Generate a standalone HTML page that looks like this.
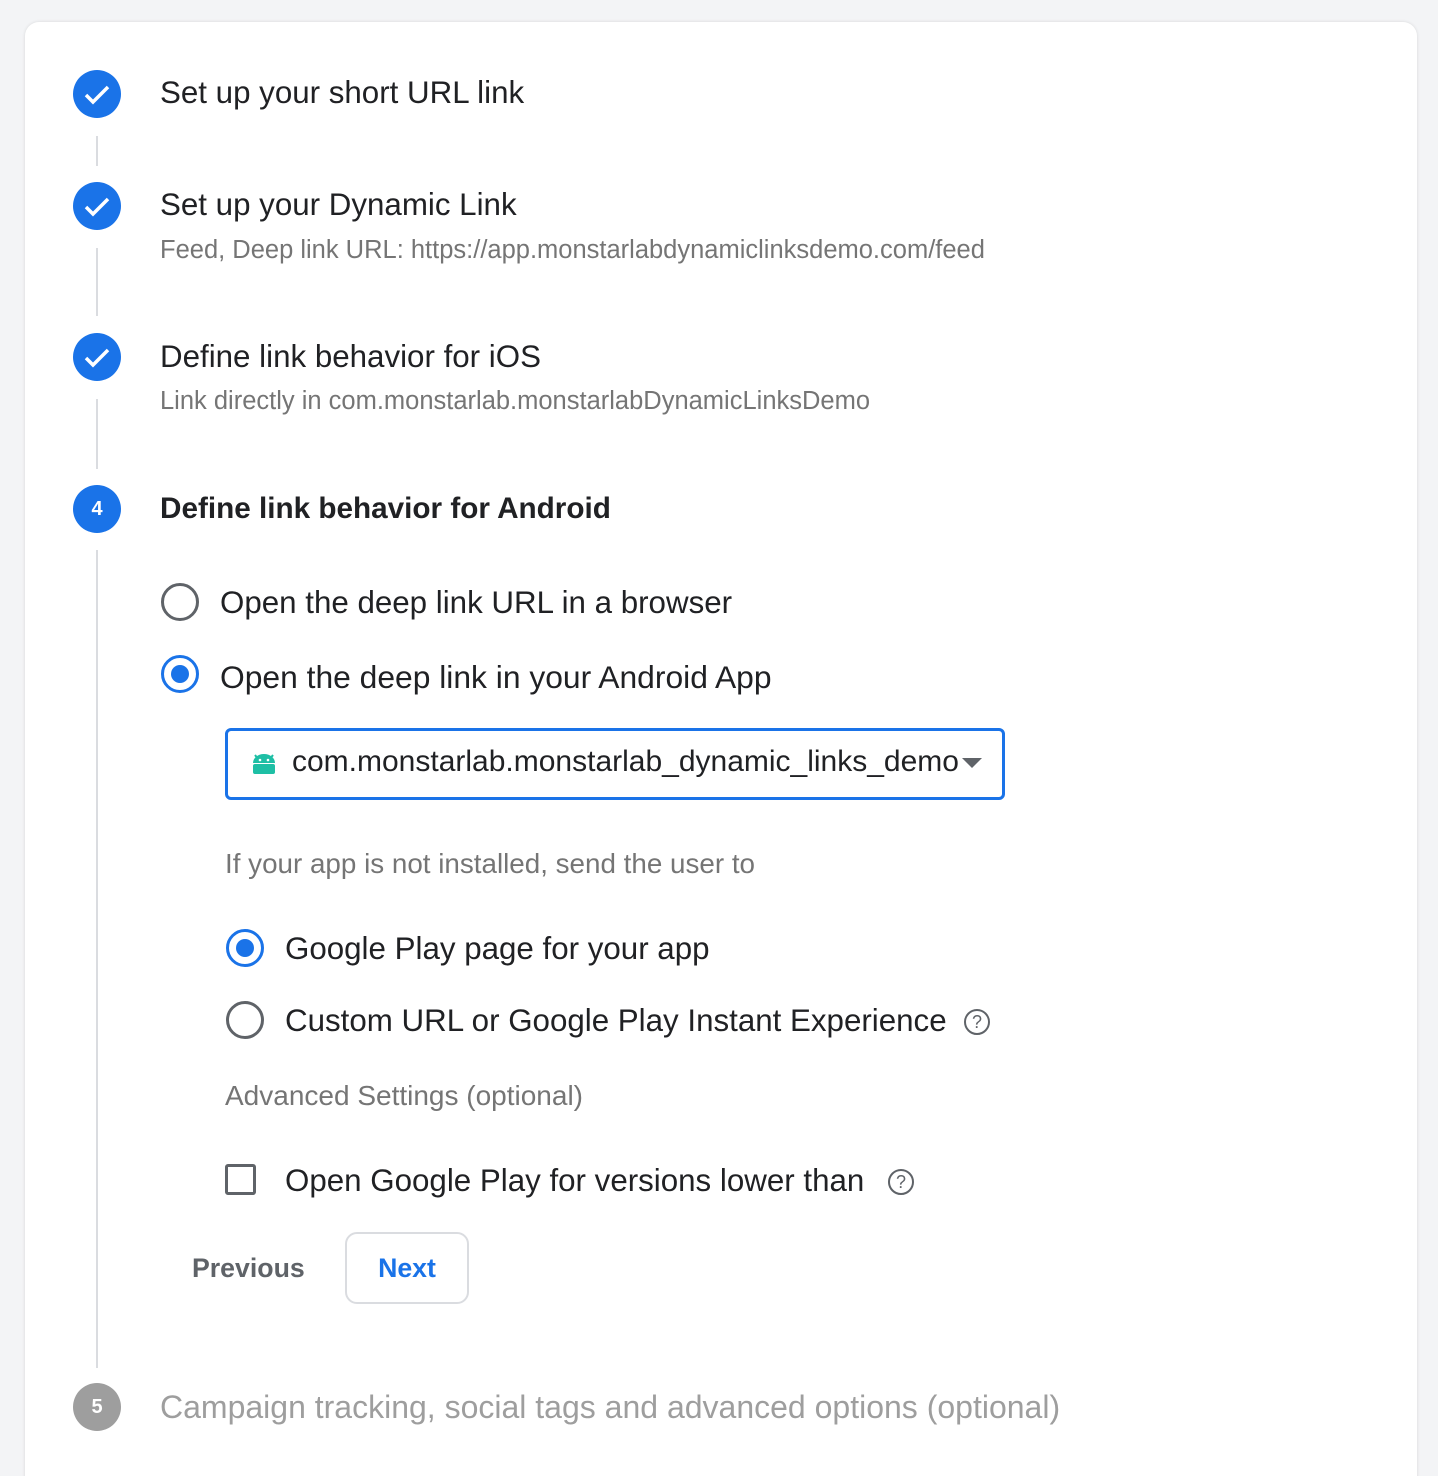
<!DOCTYPE html>
<html><head><meta charset="utf-8"><style>
html,body{margin:0;width:1438px;height:1476px;overflow:hidden}
body{background:#f3f4f6;font-family:"Liberation Sans",sans-serif;position:relative}
.card{position:absolute;left:25px;top:22px;width:1392px;height:1480px;background:#fff;border-radius:14px;box-shadow:0 0 3px rgba(0,0,0,.12)}
.t{position:absolute;white-space:nowrap;line-height:40px}
.c{position:absolute;left:73px;width:48px;height:48px;border-radius:50%;background:#1a73e8;color:#fff;font-size:20px;font-weight:bold;text-align:center;line-height:48px}
.line{position:absolute;left:96px;width:2px;background:#dadce0}
.h{font-size:31.3px;color:#202124}
.s{font-size:25.5px;color:#757575}
.r{font-size:31.3px;color:#202124}
.rad{position:absolute;width:38px;height:38px;box-sizing:border-box;border:3px solid #5f6368;border-radius:50%}
.rad.on{border-color:#1a73e8}
.rad.on:after{content:"";position:absolute;left:7px;top:7px;width:18px;height:18px;border-radius:50%;background:#1a73e8}
.q{position:absolute;width:26px;height:26px;box-sizing:border-box;border:2px solid #5f6368;border-radius:50%;font-size:18px;color:#5f6368;text-align:center;line-height:23px}
</style></head><body>
<div class="card"></div>
<div class="line" style="top:136px;height:30px"></div>
<div class="line" style="top:248px;height:68px"></div>
<div class="line" style="top:399px;height:70px"></div>
<div class="line" style="top:550px;height:818px"></div>

<div class="c" style="top:70px"><svg width="48" height="48"><path d="M13 25l7 7 15-15" stroke="#fff" stroke-width="3.5" fill="none"/></svg></div>
<div class="c" style="top:182px"><svg width="48" height="48"><path d="M13 25l7 7 15-15" stroke="#fff" stroke-width="3.5" fill="none"/></svg></div>
<div class="c" style="top:333px"><svg width="48" height="48"><path d="M13 25l7 7 15-15" stroke="#fff" stroke-width="3.5" fill="none"/></svg></div>
<div class="c" style="top:485px">4</div>
<div class="c" style="top:1383px;background:#9e9e9e">5</div>

<div class="t h" style="left:160px;top:73px">Set up your short URL link</div>
<div class="t h" style="left:160px;top:185px">Set up your Dynamic Link</div>
<div class="t s" style="left:160px;top:230px">Feed, Deep link URL: https://app.monstarlabdynamiclinksdemo.com/feed</div>
<div class="t h" style="left:160px;top:337px">Define link behavior for iOS</div>
<div class="t s" style="left:160px;top:381px">Link directly in com.monstarlab.monstarlabDynamicLinksDemo</div>
<div class="t h" style="left:160px;top:489px;font-weight:bold;font-size:29.7px">Define link behavior for Android</div>

<div class="rad" style="left:161px;top:583px"></div>
<div class="t r" style="left:220px;top:583px">Open the deep link URL in a browser</div>
<div class="rad on" style="left:161px;top:655px"></div>
<div class="t r" style="left:220px;top:657px;font-size:31.8px">Open the deep link in your Android App</div>

<div style="position:absolute;left:225px;top:728px;width:780px;height:72px;box-sizing:border-box;border:3px solid #1a73e8;border-radius:6px"></div>
<svg style="position:absolute;left:251px;top:749px" width="26" height="26" viewBox="0 0 26 26"><path d="M4 6l3 4M22 6l-3 4" stroke="#1ebfa5" stroke-width="2"/><path d="M2 14a11 9 0 0 1 22 0z" fill="#1ebfa5"/><rect x="2" y="15" width="22" height="10" rx="2" fill="#1ebfa5"/><circle cx="9" cy="11" r="1.3" fill="#fff"/><circle cx="17" cy="11" r="1.3" fill="#fff"/></svg>
<div class="t" style="left:292px;top:742px;font-size:30px;color:#202124">com.monstarlab.monstarlab_dynamic_links_demo</div>
<svg style="position:absolute;left:962px;top:758px" width="22" height="12"><path d="M0 0h20l-10 10z" fill="#5f6368"/></svg>

<div class="t s" style="left:225px;top:844px;font-size:27.8px">If your app is not installed, send the user to</div>

<div class="rad on" style="left:226px;top:929px"></div>
<div class="t r" style="left:285px;top:929px">Google Play page for your app</div>
<div class="rad" style="left:226px;top:1001px"></div>
<div class="t r" style="left:285px;top:1001px">Custom URL or Google Play Instant Experience</div>
<div class="q" style="left:964px;top:1009px">?</div>

<div class="t s" style="left:225px;top:1076px;font-size:28px">Advanced Settings (optional)</div>

<div style="position:absolute;left:225px;top:1164px;width:31px;height:31px;box-sizing:border-box;border:3px solid #5f6368;border-radius:3px"></div>
<div class="t r" style="left:285px;top:1161px">Open Google Play for versions lower than</div>
<div class="q" style="left:888px;top:1169px">?</div>

<div class="t" style="left:192px;top:1248px;font-size:26.7px;color:#5f6368;font-weight:bold">Previous</div>
<div style="position:absolute;left:345px;top:1232px;width:124px;height:72px;box-sizing:border-box;border:2px solid #dadce0;border-radius:12px;text-align:center;line-height:68px;font-size:26.7px;font-weight:bold;color:#1a73e8">Next</div>

<div class="t" style="left:160px;top:1387px;font-size:32px;color:#9e9e9e">Campaign tracking, social tags and advanced options (optional)</div>
</body></html>
